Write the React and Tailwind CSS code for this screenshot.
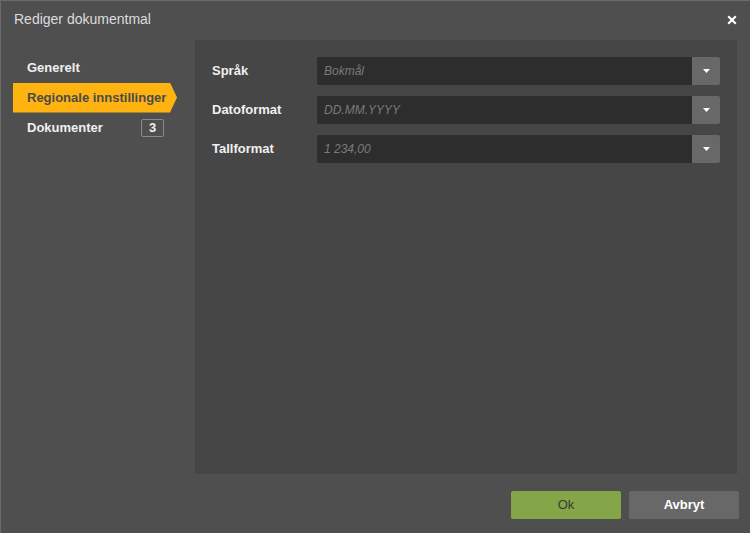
import { useState } from 'react'

const FELT = [
  { label: 'Språk', verdi: 'Bokmål' },
  { label: 'Datoformat', verdi: 'DD.MM.YYYY' },
  { label: 'Tallformat', verdi: '1 234,00' },
]

function Nedtrekk({ verdi }) {
  return (
    <div className="flex h-[28px] flex-1">
      <div className="flex flex-1 items-center rounded-l-[2px] bg-[#2d2d2d] px-[7px] text-[12px] italic text-[#7a7a7a]">
        {verdi}
      </div>
      <div className="flex w-[28px] items-center justify-center rounded-r-[2px] bg-[#686868]">
        <svg width="7" height="4" viewBox="0 0 7 4">
          <path d="M0 0h7L3.5 4z" fill="#fff" />
        </svg>
      </div>
    </div>
  )
}

export default function App() {
  const [aktiv, setAktiv] = useState('regional')

  const meny = [
    { id: 'generelt', tekst: 'Generelt' },
    { id: 'regional', tekst: 'Regionale innstillinger' },
    { id: 'dokumenter', tekst: 'Dokumenter', antall: 3 },
  ]

  return (
    <div className="flex h-[533px] w-[750px] flex-col border-l border-t border-[#6a6a6a] bg-[#4f4f4f] font-['Liberation_Sans',Arial,sans-serif] text-[13px]">
      {/* Tittel */}
      <div className="flex h-[38px] items-center justify-between pl-[13px] pr-[13px]">
        <span className="text-[14px] text-[#dcdcdc]">Rediger dokumentmal</span>
        <svg width="10" height="10" viewBox="0 0 10 10">
          <path d="M1.2 1.2l7.6 7.6M8.8 1.2l-7.6 7.6" stroke="#fff" strokeWidth="2.2" />
        </svg>
      </div>

      <div className="flex flex-1 gap-[18px] pl-[12px] pr-[13px]">
        {/* Meny */}
        <div className="flex w-[164px] flex-col pt-[14px]">
          {meny.map((m) =>
            m.id === aktiv ? (
              <div
                key={m.id}
                className="flex h-[30px] items-center bg-[#ffb310] pl-[14px] font-bold text-[#4a4a4a] [clip-path:polygon(0_0,calc(100%-7px)_0,100%_50%,calc(100%-7px)_100%,0_100%)]"
              >
                {m.tekst}
              </div>
            ) : (
              <div
                key={m.id}
                onClick={() => setAktiv(m.id)}
                className="flex h-[30px] cursor-pointer items-center justify-between pl-[14px] pr-[13px] font-bold text-[#f0f0f0]"
              >
                <span>{m.tekst}</span>
                {m.antall && (
                  <span className="flex h-[18px] w-[23px] items-center justify-center rounded-[2px] border border-[#8a8a8a] text-[#f0f0f0]">
                    {m.antall}
                  </span>
                )}
              </div>
            )
          )}
        </div>

        {/* Innhold */}
        <div className="mt-[1px] flex h-[434px] flex-1 flex-col gap-[11px] bg-[#464646] pl-[17px] pr-[17px] pt-[17px]">
          {FELT.map((f) => (
            <div key={f.label} className="flex items-center">
              <span className="w-[105px] font-bold text-[#f0f0f0]">{f.label}</span>
              <Nedtrekk verdi={f.verdi} />
            </div>
          ))}
        </div>
      </div>

      {/* Knapper */}
      <div className="flex h-[60px] items-start justify-end gap-[8px] pr-[11px] pt-[17px]">
        <button className="h-[28px] w-[110px] rounded-[2px] bg-[#84a648] text-[13px] text-[#3a3a3a]">Ok</button>
        <button className="h-[28px] w-[110px] rounded-[2px] bg-[#686868] text-[13px] font-bold text-white">Avbryt</button>
      </div>
    </div>
  )
}
